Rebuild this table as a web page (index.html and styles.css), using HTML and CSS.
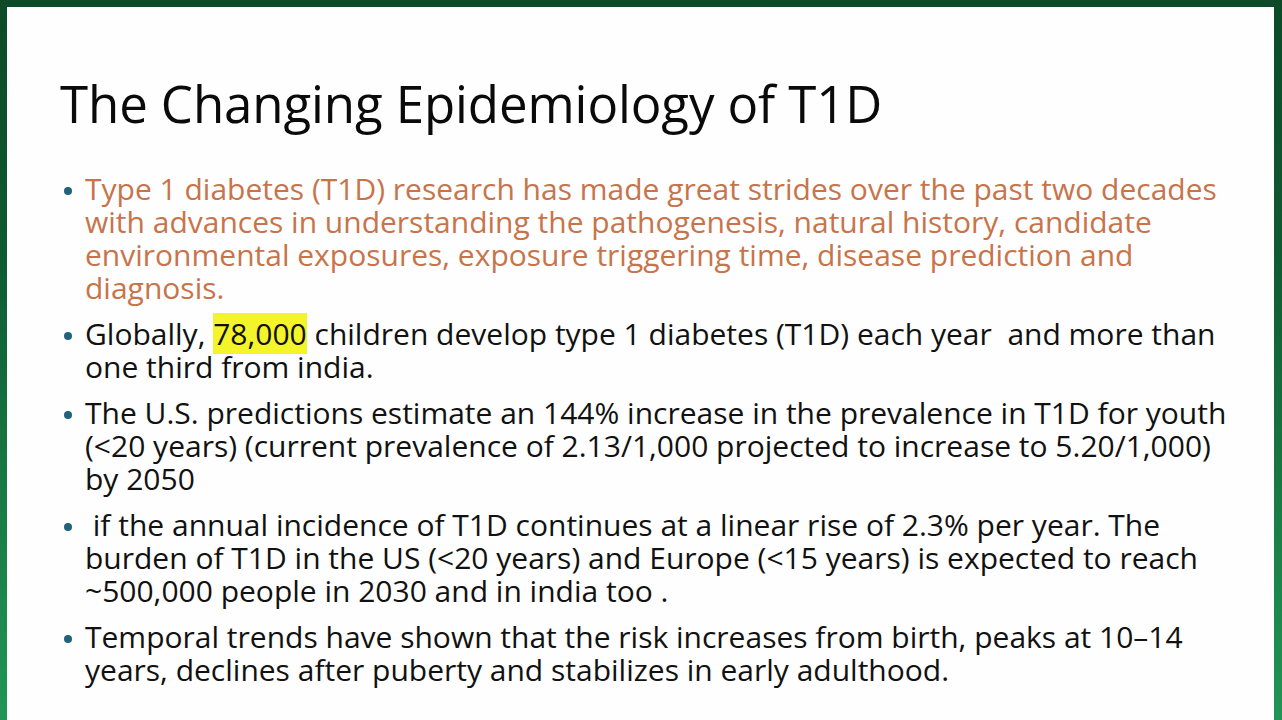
FILE: index.html
```html
<!DOCTYPE html>
<html lang="en">
<head>
<meta charset="utf-8">
<title>The Changing Epidemiology of T1D</title>
<link rel="stylesheet" href="styles.css">
</head>
<body>
<div class="frame">
  <div class="slide">
    <h1 class="title">The Changing Epidemiology of T1D</h1>
    <ul class="points">
      <li class="point orange">
        <span class="line">Type 1 diabetes (T1D) research has made great strides over the past two decades</span>
        <span class="line">with advances in understanding the pathogenesis, natural history, candidate</span>
        <span class="line">environmental exposures, exposure triggering time, disease prediction and</span>
        <span class="line">diagnosis.</span>
      </li>
      <li class="point">
        <span class="line">Globally, <mark class="hl">78,000</mark> children develop type 1 diabetes (T1D) each year &nbsp;and more than</span>
        <span class="line">one third from india.</span>
      </li>
      <li class="point">
        <span class="line">The U.S. predictions estimate an 144% increase in the prevalence in T1D for youth</span>
        <span class="line">(&lt;20 years) (current prevalence of 2.13/1,000 projected to increase to 5.20/1,000)</span>
        <span class="line">by 2050</span>
      </li>
      <li class="point">
        <span class="line">&nbsp;if the annual incidence of T1D continues at a linear rise of 2.3% per year. The</span>
        <span class="line">burden of T1D in the US (&lt;20 years) and Europe (&lt;15 years) is expected to reach</span>
        <span class="line">~500,000 people in 2030 and in india too .</span>
      </li>
      <li class="point">
        <span class="line">Temporal trends have shown that the risk increases from birth, peaks at 10–14</span>
        <span class="line">years, declines after puberty and stabilizes in early adulthood.</span>
      </li>
    </ul>
  </div>
</div>
</body>
</html>
```
FILE: styles.css
```css
html, body {
  margin: 0;
  padding: 0;
}
body {
  width: 1282px;
  height: 720px;
  overflow: hidden;
  font-family: "Open Sans", "Noto Sans", sans-serif;
}
.frame {
  box-sizing: border-box;
  width: 1282px;
  height: 720px;
  padding: 7px 8px 0 7px;
  background: linear-gradient(to bottom, #0c4a28 0%, #0f5a31 35%, #1a8048 75%, #229455 100%);
}
.slide {
  height: 713px;
  background: #fefefe;
  padding: 0 0 0 53px;
  box-sizing: border-box;
}
.title {
  margin: 0;
  padding-top: 66px;
  font-weight: 400;
  font-size: 51px;
  line-height: 60px;
  color: #0a0a0a;
  letter-spacing: -0.1px;
}
.points {
  list-style: none;
  margin: 0;
  padding: 0;
  margin-top: 39px;
}
.point {
  position: relative;
  display: flex;
  flex-direction: column;
  padding-left: 25px;
  margin-bottom: 13px;
  font-size: 30px;
  line-height: 33px;
  color: #111;
}
.point::before {
  content: "";
  position: absolute;
  left: 4px;
  top: 15px;
  width: 8px;
  height: 8px;
  border-radius: 50%;
  background: #22617a;
}
.orange {
  color: #c8744a;
}
.line {
  display: block;
  white-space: nowrap;
}
.hl {
  background: #f4f42a;
  color: inherit;
  padding: 0;
}
```
